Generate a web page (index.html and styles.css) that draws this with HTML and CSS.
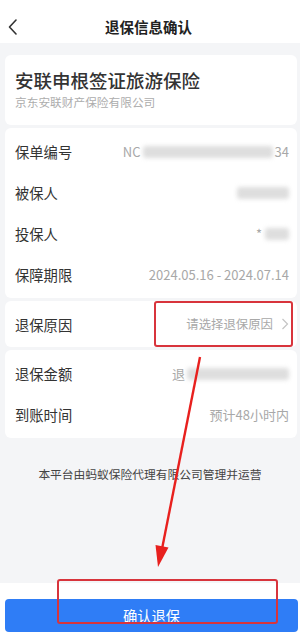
FILE: index.html
```html
<!DOCTYPE html>
<html lang="zh-CN">
<head>
<meta charset="utf-8">
<title>退保信息确认</title>
<link rel="stylesheet" href="styles.css">
</head>
<body>
<div class="page">
  <header class="header">
    <svg class="back" width="10" height="16" viewBox="0 0 10 16"><polyline points="8,1 1.5,8 8,15" fill="none" stroke="#333" stroke-width="1.6" stroke-linecap="round" stroke-linejoin="round"/></svg>
    <h1 class="title">退保信息确认</h1>
    <span></span>
  </header>

  <section class="card product">
    <div class="product-name">安联申根签证旅游保险</div>
    <div class="product-co">京东安联财产保险有限公司</div>
  </section>

  <section class="card list">
    <div class="row"><span class="label">保单编号</span><span class="value">NC<span class="blur blur-long"></span>34</span></div>
    <div class="row"><span class="label">被保人</span><span class="value"><span class="blur blur-name"></span></span></div>
    <div class="row"><span class="label">投保人</span><span class="value">*<span class="blur blur-short"></span></span></div>
    <div class="row"><span class="label">保障期限</span><span class="value">2024.05.16 - 2024.07.14</span></div>
  </section>

  <section class="card">
    <div class="row row-tall"><span class="label">退保原因</span><span class="value select">请选择退保原因<svg class="chev" width="8" height="12" viewBox="0 0 8 12"><polyline points="1.5,1 6.5,6 1.5,11" fill="none" stroke="#c4c4c4" stroke-width="1.2"/></svg></span></div>
  </section>

  <section class="card list">
    <div class="row"><span class="label">退保金额</span><span class="value">退<span class="blur blur-amount"></span></span></div>
    <div class="row"><span class="label">到账时间</span><span class="value">预计48小时内</span></div>
  </section>

  <p class="notice">本平台由蚂蚁保险代理有限公司管理并运营</p>

  <div class="spacer"></div>

  <footer class="bottom">
    <button class="confirm">确认退保</button>
  </footer>

  <div class="mark mark-reason"></div>
  <div class="mark mark-button"></div>
  <svg class="arrow" width="300" height="635" viewBox="0 0 300 635">
    <line x1="200" y1="357" x2="162" y2="549" stroke="#e8201e" stroke-width="2.4"/>
    <polygon points="158,567 168.5,547.5 155.5,545" fill="#e8201e"/>
  </svg>
</div>
</body>
</html>
```

FILE: styles.css
```css
* { box-sizing: border-box; }
html, body { margin: 0; padding: 0; }
body {
  font-family: "Noto Sans CJK SC", "Noto Sans", sans-serif;
  background: #f4f5f7;
}
.page {
  position: relative;
  width: 300px;
  height: 635px;
  display: flex;
  flex-direction: column;
  overflow: hidden;
  background: #f4f5f7;
}
.header {
  height: 43px;
  background: #fff;
  padding-top: 11px;
  display: grid;
  grid-template-columns: 40px 1fr 40px;
  align-items: center;
}
.back { margin-left: 8px; }
.title {
  margin: 0;
  text-align: center;
  font-size: 14.5px;
  font-weight: 700;
  color: #222;
  line-height: 20px;
  padding-right: 3px;
}
.card {
  background: #fff;
  margin: 0 3px 3px 5px;
  border-radius: 6px;
}
.product {
  margin-top: 12px;
  padding: 13px 10px 15px;
}
.product-name {
  font-size: 18.5px;
  line-height: 24px;
  font-weight: 500;
  color: #333;
}
.product-co {
  margin-top: 2px;
  font-size: 11.7px;
  line-height: 16px;
  color: #adadad;
}
.list { padding: 3px 0; }
.row {
  height: 41px;
  display: flex;
  align-items: center;
  justify-content: space-between;
  padding: 0 8px 0 10px;
}
.row-tall { height: 46px; }
.label {
  font-size: 14.3px;
  color: #333;
}
.value {
  display: flex;
  align-items: center;
  font-size: 13px;
  color: #a8a8a8;
}
.select { font-size: 12.4px; }
.chev { margin-left: 8px; }
.blur {
  display: inline-block;
  height: 12px;
  background: #dedede;
  filter: blur(2px);
  border-radius: 3px;
}
.blur-long { width: 130px; margin: 0 2px; }
.blur-name { width: 52px; }
.blur-short { width: 24px; margin-left: 3px; }
.blur-amount { width: 102px; margin-left: 2px; }
.notice {
  margin: 25px 0 0;
  text-align: center;
  font-size: 11.75px;
  line-height: 16px;
  color: #444;
}
.spacer { flex: 1; }
.bottom {
  background: #fff;
  padding: 16px 2px 3px 5px;
}
.confirm {
  display: block;
  width: 100%;
  height: 33px;
  border: 0;
  border-radius: 4px;
  background: #2f7df6;
  color: #fff;
  font-family: "Noto Sans CJK SC", sans-serif;
  font-size: 14.3px;
  padding: 0;
}
.mark {
  position: absolute;
  border: 2px solid #d8343c;
  border-radius: 3px;
}
.mark-reason { left: 154px; top: 301px; width: 139px; height: 46px; }
.mark-button { left: 57px; top: 579px; width: 221px; height: 45px; }
.arrow { position: absolute; left: 0; top: 0; pointer-events: none; }
```
